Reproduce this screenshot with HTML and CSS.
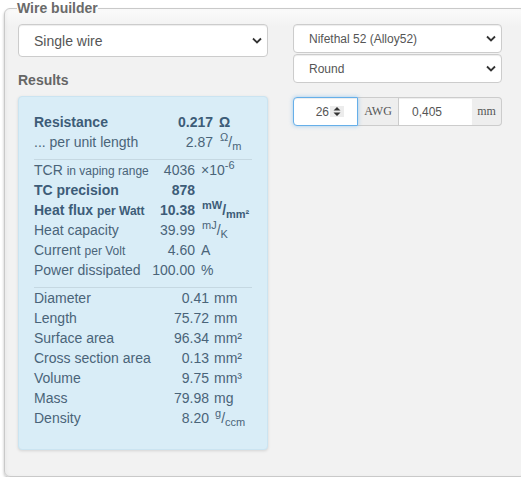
FILE: index.html
```html
<!DOCTYPE html>
<html>
<head>
<meta charset="utf-8">
<link rel="stylesheet" href="styles.css">
</head>
<body>
<fieldset class="builder">
  <legend class="builder-title">Wire builder</legend>
  <div class="cols">
    <div class="col-left">
      <div class="select select-lg"><span>Single wire</span>
        <svg class="chev" width="10" height="7" viewBox="0 0 10 7"><path d="M1 1.5 L5 5.5 L9 1.5" fill="none" stroke="#333" stroke-width="1.8"/></svg>
      </div>
      <div class="results-label">Results</div>
      <div class="results">
        <div class="sect s1">
          <div class="row b"><span class="lab">Resistance</span><span class="val">0.217</span><span class="unit">Ω</span></div>
          <div class="row"><span class="lab">... per unit length</span><span class="val">2.87</span><span class="unit"><sup>Ω</sup>/<sub>m</sub></span></div>
        </div>
        <div class="sect s2">
          <div class="row"><span class="lab">TCR <small>in vaping range</small></span><span class="val">4036</span><span class="unit">×10<sup class="exp">-6</sup></span></div>
          <div class="row b"><span class="lab">TC precision</span><span class="val">878</span><span class="unit"></span></div>
          <div class="row b"><span class="lab">Heat flux <small>per Watt</small></span><span class="val">10.38</span><span class="unit"><sup>mW</sup>/<sub>mm²</sub></span></div>
          <div class="row"><span class="lab">Heat capacity</span><span class="val">39.99</span><span class="unit"><sup>mJ</sup>/<sub>K</sub></span></div>
          <div class="row"><span class="lab">Current <small>per Volt</small></span><span class="val">4.60</span><span class="unit">A</span></div>
          <div class="row"><span class="lab">Power dissipated</span><span class="val">100.00</span><span class="unit">%</span></div>
        </div>
        <div class="sect s3">
          <div class="row"><span class="lab">Diameter</span><span class="val">0.41</span><span class="unit">mm</span></div>
          <div class="row"><span class="lab">Length</span><span class="val">75.72</span><span class="unit">mm</span></div>
          <div class="row"><span class="lab">Surface area</span><span class="val">96.34</span><span class="unit">mm²</span></div>
          <div class="row"><span class="lab">Cross section area</span><span class="val">0.13</span><span class="unit">mm²</span></div>
          <div class="row"><span class="lab">Volume</span><span class="val">9.75</span><span class="unit">mm³</span></div>
          <div class="row"><span class="lab">Mass</span><span class="val">79.98</span><span class="unit">mg</span></div>
          <div class="row"><span class="lab">Density</span><span class="val">8.20</span><span class="unit"><sup>g</sup>/<sub>ccm</sub></span></div>
        </div>
      </div>
    </div>
    <div class="col-right">
      <div class="select select-sm"><span>Nifethal 52 (Alloy52)</span>
        <svg class="chev" width="10" height="7" viewBox="0 0 10 7"><path d="M1 1.5 L5 5.5 L9 1.5" fill="none" stroke="#333" stroke-width="1.8"/></svg>
      </div>
      <div class="select select-sm second"><span>Round</span>
        <svg class="chev" width="10" height="7" viewBox="0 0 10 7"><path d="M1 1.5 L5 5.5 L9 1.5" fill="none" stroke="#333" stroke-width="1.8"/></svg>
      </div>
      <div class="input-group">
        <div class="num-input"><span>26</span>
          <span class="spinner"><svg width="14" height="11" viewBox="0 0 14 11"><path d="M3.5 4.5 L7 1 L10.5 4.5 Z M3.5 6.5 L7 10 L10.5 6.5 Z" fill="#333"/></svg></span>
        </div>
        <div class="addon awg">AWG</div>
        <div class="text-input">0,405</div>
        <div class="addon mm">mm</div>
      </div>
    </div>
  </div>
</fieldset>
</body>
</html>
```

FILE: styles.css
```css
html, body {
  margin: 0;
  padding: 0;
  background: #fff;
  overflow: hidden;
}
body {
  font-family: "Liberation Sans", Arial, sans-serif;
  font-size: 14px;
  color: #555;
}
.builder {
  box-sizing: border-box;
  margin: 0 0 0 4px;
  width: 522px;
  min-width: 0;
  border: 1px solid #c9c9c9;
  border-radius: 6px;
  padding: 8px 0 26px 12px;
  background: linear-gradient(#fbfbfb, #f2f2f2 18px);
  box-shadow: 0 2px 3px rgba(0,0,0,0.25), inset 2px 0 3px rgba(0,0,0,0.03);
}
.builder-title {
  padding: 0;
  font-weight: bold;
  font-size: 14px;
  line-height: 16px;
  color: #6a6a6a;
}
.cols {
  display: flex;
  gap: 25px;
  margin-left: 1px;
}
.col-left { width: 250px; }
.col-right { width: 209px; }

.select {
  box-sizing: border-box;
  display: flex;
  align-items: center;
  justify-content: space-between;
  background: #fff;
  border: 1px solid #ccc;
  border-radius: 4px;
  box-shadow: inset 0 1px 1px rgba(0,0,0,0.075);
  color: #555;
}
.select-lg {
  height: 33px;
  padding: 0 5px 0 15px;
  font-size: 14px;
}
.select-sm {
  height: 29px;
  padding: 0 5px 0 15px;
  font-size: 12px;
}
.select-sm.second { margin-top: 1px; }
.chev { display: block; }

.results-label {
  margin-top: 13px;
  line-height: 20px;
  margin-bottom: 6px;
  font-weight: bold;
  color: #666;
}
.results {
  background: #d9edf7;
  border: 1px solid #cbe4f1;
  border-radius: 4px;
  box-shadow: 0 1px 3px rgba(0,0,0,0.13);
  padding: 15px 15px 21px 15px;
  color: #4a6479;
}
.sect { margin-bottom: 7px; }
.sect:last-child { margin-bottom: 0; }
.s2, .s3 { border-top: 1px solid #c5d8e2; }
.row {
  display: grid;
  column-gap: 5px;
  line-height: 20px;
  height: 20px;
  white-space: nowrap;
}
.s1 .row { grid-template-columns: 1fr auto 33px; }
.s1 .val { margin-right: 1px; }
.s2 .row { grid-template-columns: 1fr auto 51px; }
.s2 .val { margin-right: 1px; }
.s3 .row { grid-template-columns: 1fr auto 38px; }
.val { text-align: right; }
.row.b { font-weight: bold; color: #3d5c78; }
.lab small { font-size: 12px; }
sup, sub {
  font-size: 11px;
  line-height: 0;
  vertical-align: baseline;
  position: relative;
}
sup { top: -6px; margin-left: 1px; }
sub { top: 3px; }
sup.exp { top: -6px; margin-left: 0; }

.input-group {
  display: flex;
  margin-top: 14px;
  height: 29px;
  font-size: 12px;
}
.num-input {
  box-sizing: border-box;
  width: 65px;
  display: flex;
  align-items: center;
  justify-content: flex-end;
  gap: 1px;
  padding-right: 13px;
  background: #fff;
  border: 1px solid #66afe9;
  border-radius: 4px 0 0 4px;
  box-shadow: inset 0 1px 1px rgba(0,0,0,0.075), 0 0 4px rgba(102,175,233,0.6);
  color: #555;
  position: relative;
  z-index: 1;
}
.spinner {
  display: block;
  background: #ececec;
  height: 11px;
}
.spinner svg { display: block; }
.addon {
  box-sizing: border-box;
  display: flex;
  align-items: center;
  justify-content: center;
  background: #eee;
  border: 1px solid #ccc;
  font-family: "Liberation Serif", "Times New Roman", serif;
  font-size: 12px;
  color: #555;
}
.awg { width: 41px; border-left: none; }
.mm { width: 30px; border-left: none; border-radius: 0 4px 4px 0; }
.text-input {
  box-sizing: border-box;
  width: 73px;
  display: flex;
  align-items: center;
  padding-left: 13px;
  background: #fff;
  border: 1px solid #ccc;
  border-left: none;
  border-right: none;
  box-shadow: inset 0 1px 1px rgba(0,0,0,0.075);
  color: #555;
}
```
